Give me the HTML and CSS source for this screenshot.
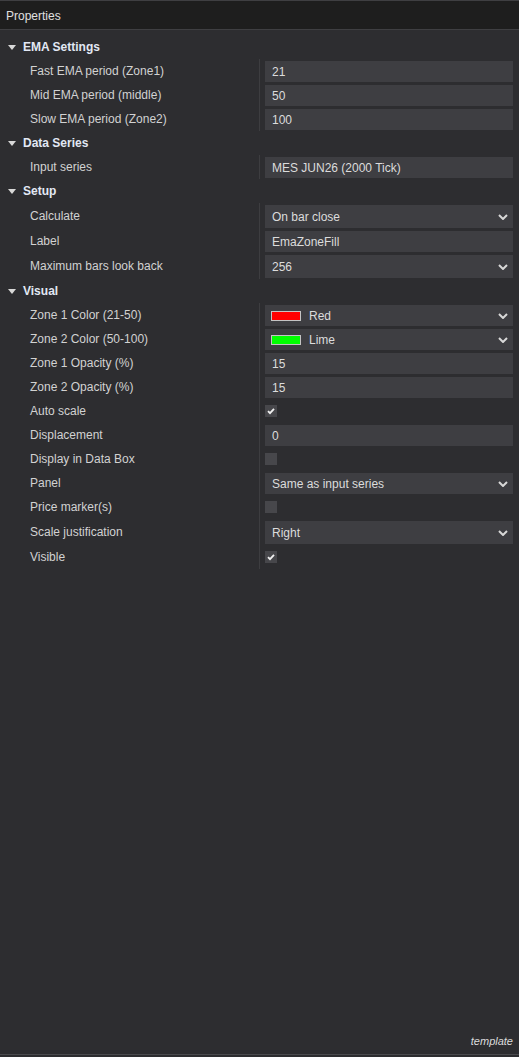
FILE: index.html
```html
<!DOCTYPE html>
<html>
<head>
<meta charset="utf-8">
<title>Properties</title>
<link rel="stylesheet" href="styles.css">
</head>
<body>
<div class="panel">
  <div class="titlebar">Properties</div>
  <div class="content">
    <div class="section">
      <div class="sec-head"><span class="tri"></span>EMA Settings</div>
      <div class="row"><div class="label">Fast EMA period (Zone1)</div><div class="value"><div class="box">21</div></div></div>
      <div class="row"><div class="label">Mid EMA period (middle)</div><div class="value"><div class="box">50</div></div></div>
      <div class="row"><div class="label">Slow EMA period (Zone2)</div><div class="value"><div class="box">100</div></div></div>
    </div>
    <div class="section">
      <div class="sec-head"><span class="tri"></span>Data Series</div>
      <div class="row"><div class="label">Input series</div><div class="value"><div class="box">MES JUN26 (2000 Tick)</div></div></div>
    </div>
    <div class="section">
      <div class="sec-head"><span class="tri"></span>Setup</div>
      <div class="row tall"><div class="label">Calculate</div><div class="value"><div class="box select">On bar close<svg class="chev" viewBox="0 0 10 6" width="10" height="6"><path d="M1 1 L5 5 L9 1" /></svg></div></div></div>
      <div class="row"><div class="label">Label</div><div class="value"><div class="box">EmaZoneFill</div></div></div>
      <div class="row tall"><div class="label">Maximum bars look back</div><div class="value"><div class="box select">256<svg class="chev" viewBox="0 0 10 6" width="10" height="6"><path d="M1 1 L5 5 L9 1" /></svg></div></div></div>
    </div>
    <div class="section">
      <div class="sec-head"><span class="tri"></span>Visual</div>
      <div class="row"><div class="label">Zone 1 Color (21-50)</div><div class="value"><div class="box select"><span class="swatch red"></span>Red<svg class="chev" viewBox="0 0 10 6" width="10" height="6"><path d="M1 1 L5 5 L9 1" /></svg></div></div></div>
      <div class="row"><div class="label">Zone 2 Color (50-100)</div><div class="value"><div class="box select"><span class="swatch lime"></span>Lime<svg class="chev" viewBox="0 0 10 6" width="10" height="6"><path d="M1 1 L5 5 L9 1" /></svg></div></div></div>
      <div class="row"><div class="label">Zone 1 Opacity (%)</div><div class="value"><div class="box">15</div></div></div>
      <div class="row"><div class="label">Zone 2 Opacity (%)</div><div class="value"><div class="box">15</div></div></div>
      <div class="row"><div class="label">Auto scale</div><div class="value"><span class="check on"><svg viewBox="0 0 12 12" width="12" height="12"><path d="M3 6.2 L5 8.2 L9 3.8" /></svg></span></div></div>
      <div class="row"><div class="label">Displacement</div><div class="value"><div class="box">0</div></div></div>
      <div class="row"><div class="label">Display in Data Box</div><div class="value"><span class="check"></span></div></div>
      <div class="row"><div class="label">Panel</div><div class="value"><div class="box select">Same as input series<svg class="chev" viewBox="0 0 10 6" width="10" height="6"><path d="M1 1 L5 5 L9 1" /></svg></div></div></div>
      <div class="row"><div class="label">Price marker(s)</div><div class="value"><span class="check"></span></div></div>
      <div class="row tall"><div class="label">Scale justification</div><div class="value"><div class="box select">Right<svg class="chev" viewBox="0 0 10 6" width="10" height="6"><path d="M1 1 L5 5 L9 1" /></svg></div></div></div>
      <div class="row"><div class="label">Visible</div><div class="value"><span class="check on"><svg viewBox="0 0 12 12" width="12" height="12"><path d="M3 6.2 L5 8.2 L9 3.8" /></svg></span></div></div>
    </div>
  </div>
  <div class="footer"><span class="tmpl">template</span></div>
</div>
</body>
</html>
```

FILE: styles.css
```css
html, body {
  margin: 0;
  padding: 0;
  background: #2d2d30;
}

.panel {
  width: 519px;
  height: 1057px;
  display: flex;
  flex-direction: column;
  background: #2d2d30;
  font-family: "Liberation Sans", Arial, sans-serif;
  font-size: 12px;
  color: #d2d2d2;
  box-sizing: border-box;
  border-top: 1px solid #3f3f42;
}

.titlebar {
  height: 29px;
  box-sizing: border-box;
  background: #1e1e1e;
  border-bottom: 1px solid #3f3f42;
  padding: 7px 0 0 6px;
  font-size: 12px;
  color: #e0e0e0;
  line-height: 16px;
}

.content {
  padding-top: 5px;
  flex: 1;
}

.sec-head {
  height: 24px;
  display: flex;
  align-items: center;
  padding-left: 8px;
  font-weight: bold;
  color: #e2e8f4;
}

.tri {
  width: 0;
  height: 0;
  border-left: 4.5px solid transparent;
  border-right: 4.5px solid transparent;
  border-top: 5px solid #d8d8d8;
  margin-right: 7px;
  margin-top: 1px;
}

.row {
  display: grid;
  grid-template-columns: 259px 1fr;
  height: 24px;
}

.row.tall {
  height: 26px;
}

.label {
  padding-left: 30px;
  display: flex;
  align-items: center;
  color: #d2d2d2;
  white-space: nowrap;
}

.value {
  border-left: 1px solid #3d3d40;
  padding: 2px 6px 1px 5px;
  display: flex;
  align-items: flex-start;
}

.box {
  flex: 1;
  height: 21px;
  box-sizing: border-box;
  background: #3e3e42;
  padding-left: 7px;
  display: flex;
  align-items: center;
  color: #dcdcdc;
  white-space: nowrap;
}

.row.tall .box {
  height: 23px;
}

.chev {
  margin-left: auto;
  margin-right: 5px;
  fill: none;
  stroke: #d8d8d8;
  stroke-width: 2;
}

.swatch {
  width: 30px;
  height: 10px;
  box-sizing: border-box;
  border: 1px solid #c4c4c4;
  margin-left: -1px;
  margin-right: 8px;
}

.swatch.red {
  background: #ff0000;
}

.swatch.lime {
  background: #00ff00;
}

.check {
  width: 12px;
  height: 12px;
  margin-top: 4px;
  background: #47474b;
  display: block;
}

.check svg {
  display: block;
  fill: none;
  stroke: #f0f0f0;
  stroke-width: 1.8;
}

.footer {
  height: 24px;
  box-sizing: border-box;
  display: flex;
  justify-content: flex-end;
  align-items: flex-start;
  padding: 4px 6px 0 0;
  border-bottom: 1px solid #4a4a4d;
  margin-bottom: 2px;
}

.tmpl {
  font-style: italic;
  font-size: 11px;
  color: #dcdcdc;
}
```
